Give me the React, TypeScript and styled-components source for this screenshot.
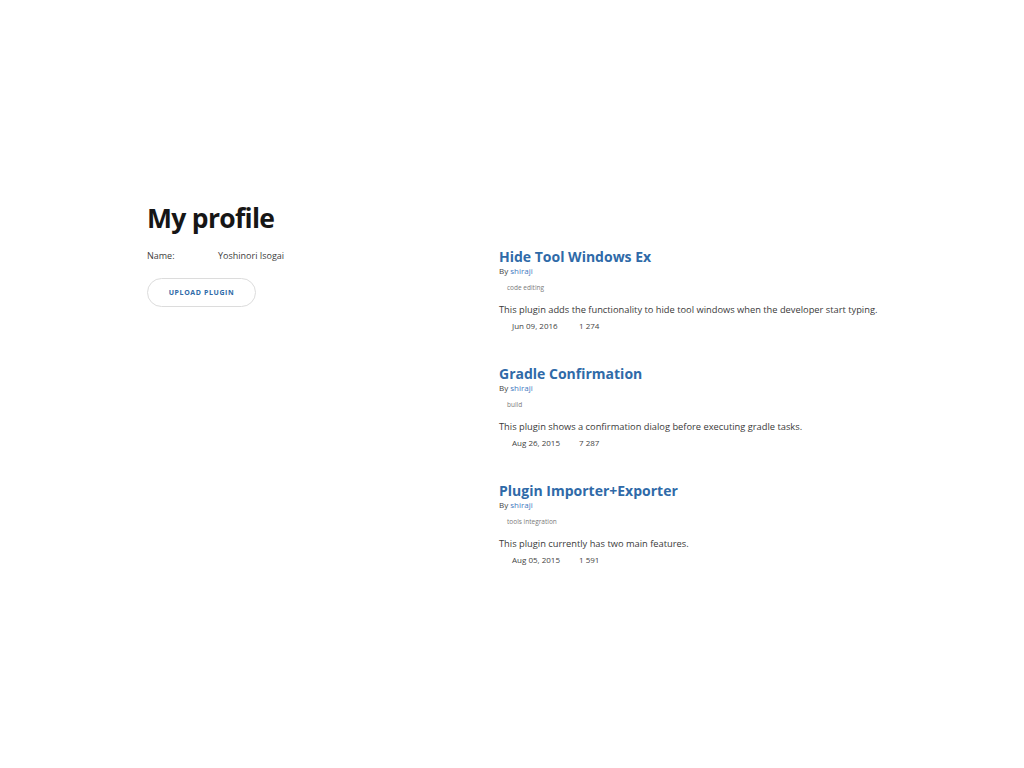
import React from 'react';
import styled, { createGlobalStyle } from 'styled-components';

const GlobalStyle = createGlobalStyle`
    html, body {
        margin: 0;
        padding: 0;
        background: #fff;
    }
    body {
        font-family: 'Open Sans', 'DejaVu Sans', sans-serif;
        color: #333;
        -webkit-font-smoothing: antialiased;
    }
`;

const Container = styled.div`
    width: 730px;
    margin: 0 auto;
    padding-top: 198px;
`;

const Title = styled.h1`
    margin: 0 0 18px;
    font-size: 26.5px;
    font-weight: 700;
    line-height: 40px;
    color: #161616;
    letter-spacing: -0.7px;
`;

const Columns = styled.div`
    display: grid;
    grid-template-columns: 352px 1fr;
`;

const Info = styled.div`
    display: flex;
    flex-direction: column;
    align-items: flex-start;
`;

const InfoRow = styled.div`
    display: flex;
    font-size: 9px;
    line-height: 14px;
    color: #3d3d3d;
    margin-top: -7px;
    .label {
        width: 71px;
    }
`;

const UploadButton = styled.button`
    margin-top: 15px;
    width: 109px;
    height: 29px;
    border: 1px solid #dcdcdc;
    border-radius: 15px;
    background: #fff;
    font-family: inherit;
    font-size: 7px;
    font-weight: 700;
    letter-spacing: 0.6px;
    color: #2f6aa8;
    cursor: pointer;
`;

const PluginList = styled.div`
    display: flex;
    flex-direction: column;
    gap: 32px;
    margin-top: -9px;
`;

const PluginItem = styled.div`
    display: flex;
    flex-direction: column;
    .name {
        font-size: 14px;
        font-weight: 700;
        line-height: 20px;
        color: #2f6aa8;
    }
    .author {
        font-size: 8px;
        line-height: 12px;
        color: #444;
        margin-top: -2px;
        a {
            color: #3f7bbf;
            text-decoration: none;
        }
    }
    .tags {
        margin-top: 6px;
        padding-left: 8px;
        font-size: 6.5px;
        line-height: 10px;
        color: #7a7a7a;
    }
    .desc {
        margin-top: 10px;
        font-size: 9.3px;
        line-height: 14px;
        color: #3a3a3a;
        white-space: nowrap;
    }
    .meta {
        margin-top: 3px;
        display: flex;
        padding-left: 13px;
        font-size: 8px;
        line-height: 12px;
        color: #444;
    }
    .date {
        width: 67px;
    }
`;

const plugins = [
    {
        name: 'Hide Tool Windows Ex',
        tag: 'code editing',
        desc: 'This plugin adds the functionality to hide tool windows when the developer start typing.',
        date: 'Jun 09, 2016',
        downloads: '1 274',
    },
    {
        name: 'Gradle Confirmation',
        tag: 'build',
        desc: 'This plugin shows a confirmation dialog before executing gradle tasks.',
        date: 'Aug 26, 2015',
        downloads: '7 287',
    },
    {
        name: 'Plugin Importer+Exporter',
        tag: 'tools integration',
        desc: 'This plugin currently has two main features.',
        date: 'Aug 05, 2015',
        downloads: '1 591',
    },
];

export default function App() {
    return (
        <>
            <GlobalStyle />
            <Container>
                <Title>My profile</Title>
                <Columns>
                    <Info>
                        <InfoRow>
                            <span className='label'>Name:</span>
                            <span>Yoshinori Isogai</span>
                        </InfoRow>
                        <UploadButton>UPLOAD PLUGIN</UploadButton>
                    </Info>
                    <PluginList>
                        {plugins.map((p, index) => (
                            <PluginItem key={index}>
                                <div className='name'>{p.name}</div>
                                <div className='author'>
                                    By <a href='#'>shiraji</a>
                                </div>
                                <div className='tags'>{p.tag}</div>
                                <div className='desc'>{p.desc}</div>
                                <div className='meta'>
                                    <span className='date'>{p.date}</span>
                                    <span>{p.downloads}</span>
                                </div>
                            </PluginItem>
                        ))}
                    </PluginList>
                </Columns>
            </Container>
        </>
    );
}
